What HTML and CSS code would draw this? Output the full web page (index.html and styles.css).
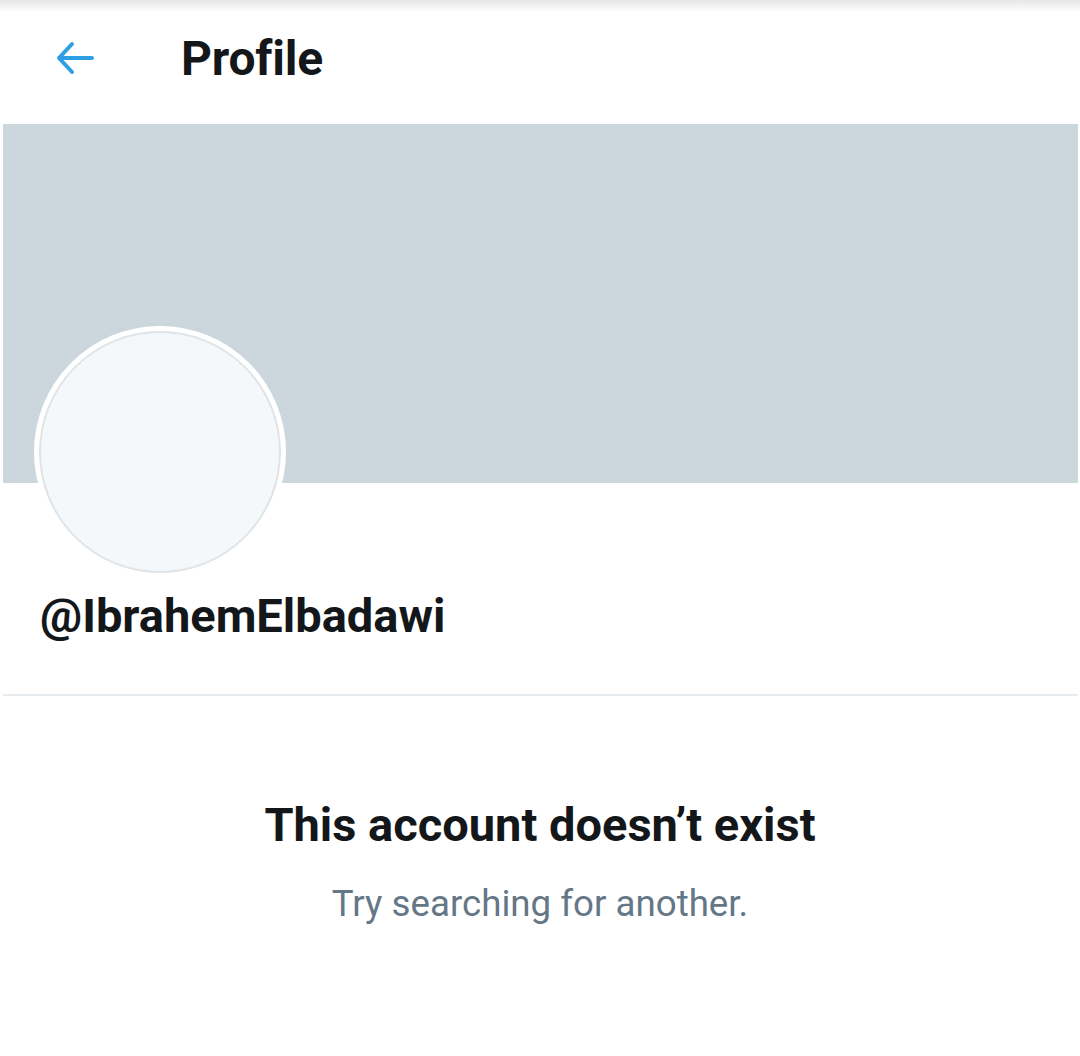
FILE: index.html
```html
<!DOCTYPE html>
<html>
<head>
<meta charset="utf-8">
<link rel="stylesheet" href="styles.css">
</head>
<body>
<div class="page">
  <div class="topshadow"></div>
  <header class="header">
    <div class="back">
      <svg width="40" height="34" viewBox="0 0 40 34"><path d="M37 17H4M17 3L4 17l13 14" fill="none" stroke="#2f9fe3" stroke-width="4" stroke-linecap="round" stroke-linejoin="round"/></svg>
    </div>
    <h1 class="title">Profile</h1>
  </header>
  <div class="banner"></div>
  <div class="profile">
    <div class="avatar"><div class="avatar-inner"></div></div>
    <div class="handle">@IbrahemElbadawi</div>
  </div>
  <div class="divider"></div>
  <div class="empty">
    <div class="empty-title">This account doesn’t exist</div>
    <div class="empty-sub">Try searching for another.</div>
  </div>
</div>
</body>
</html>
```

FILE: styles.css
```css
html, body {
  margin: 0;
  padding: 0;
  background: #ffffff;
}
.page {
  width: 1080px;
  height: 1056px;
  font-family: Roboto, "Liberation Sans", sans-serif;
  color: #14171a;
  overflow: hidden;
}
.topshadow {
  height: 12px;
  background: linear-gradient(#e6e6e6, #ffffff);
}
.header {
  height: 112px;
  display: flex;
  align-items: center;
  box-sizing: border-box;
  padding-bottom: 20px;
}
.back {
  width: 40px;
  height: 34px;
  margin-left: 55px;
  display: flex;
}
.title {
  margin: 0 0 0 86px;
  font-size: 48px;
  font-weight: 700;
  letter-spacing: -0.2px;
}
.banner {
  height: 359px;
  margin: 0 2px 0 3px;
  background: #ccd6dd;
}
.profile {
  display: flex;
  flex-direction: column;
  align-items: flex-start;
  padding-left: 34px;
  height: 211px;
}
.avatar {
  width: 252px;
  height: 252px;
  border-radius: 50%;
  background: #ffffff;
  margin-top: -157px;
  display: flex;
  align-items: center;
  justify-content: center;
}
.avatar-inner {
  width: 238px;
  height: 238px;
  border-radius: 50%;
  background: #f5f8fa;
  border: 2px solid #e1e4e6;
}
.handle {
  margin: 10px 0 0 6px;
  font-size: 47px;
  font-weight: 700;
  line-height: 56px;
}
.divider {
  height: 2px;
  margin: 0 2px 0 3px;
  background: #e6ecf0;
}
.empty {
  text-align: center;
  padding-top: 99px;
}
.empty-title {
  font-size: 47px;
  font-weight: 700;
  line-height: 60px;
}
.empty-sub {
  margin-top: 25px;
  font-size: 36.7px;
  color: #657786;
  line-height: 48px;
}
```
